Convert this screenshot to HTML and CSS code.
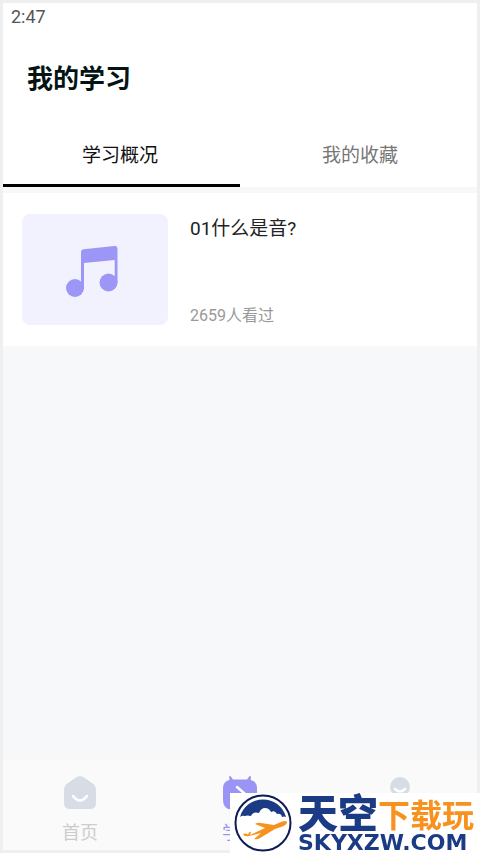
FILE: index.html
```html
<!DOCTYPE html>
<html lang="zh-CN">
<head>
<meta charset="utf-8">
<meta name="viewport" content="width=device-width, initial-scale=1">
<title>我的学习</title>
<link rel="stylesheet" href="styles.css">
</head>
<body>
<div class="app">
  <header class="header">
    <time class="clock">2:47</time>
    <h1 class="title">我的学习</h1>
  </header>
  <div class="tabs" role="tablist">
    <button class="tab tab-active" type="button" role="tab" aria-selected="true">学习概况</button>
    <button class="tab" type="button" role="tab" aria-selected="false">我的收藏</button>
  </div>
  <main class="content">
    <article class="course">
      <div class="cover">
        <svg class="note" viewBox="0 0 58 52" aria-hidden="true">
          <path d="M15 43V6q0-2.500 2.500-2.800L48.500 0Q51.500-.2 51.500 2.500V37h-2.800V14L18 17v26z"/>
          <circle cx="9" cy="42" r="9"/>
          <circle cx="42.500" cy="36.500" r="9"/>
        </svg>
      </div>
      <div class="info">
        <h2 class="name">01什么是音?</h2>
        <p class="views">2659人看过</p>
      </div>
    </article>
  </main>
  <nav class="nav">
    <a class="item" href="#">
      <svg class="icon" viewBox="0 0 36 36" aria-hidden="true">
        <path fill="#d7dce5" d="M14 2.500q4-2.500 8 0l8.500 5.800Q34 10.800 34 15v13q0 6-6 6H8q-6 0-6-6V15q0-4.200 3.500-6.700z"/>
        <path class="smile" d="M11 21q7 9 14 0"/>
      </svg>
      <span>首页</span>
    </a>
    <a class="item item-active" href="#">
      <svg class="icon" viewBox="0 0 36 36" aria-hidden="true">
        <path fill="#9a95f5" d="M7 1.500 8.500 1l2.500 3.500h14L27.500 1l1.500.5-.3 3.500Q35 6.500 35 13v12q0 9.500-9 9.500H10Q1 34.500 1 25V13Q1 6.500 7.500 5z"/>
        <path class="smile" d="m15 12 7 6-7 6"/>
      </svg>
      <span>学习</span>
    </a>
    <a class="item" href="#" aria-label="我的">
      <svg class="icon" viewBox="0 0 36 36" aria-hidden="true">
        <circle cx="18" cy="12" r="10" fill="#d7dce5"/>
        <path class="smile" d="M13 14q5 5 10 0"/>
        <path fill="#d7dce5" d="M4 34q0-10 14-10t14 10z"/>
      </svg>
    </a>
  </nav>
</div>
<aside class="brand">
  <svg class="logo" viewBox="0 0 60 60" aria-hidden="true">
    <circle cx="30" cy="30" r="27.500" fill="#fff" stroke="#101b55" stroke-width="2"/>
    <path fill="#1b3c85" d="M7 24C10 13 19 6.500 30 6.500S50 13 53 24q-2-1-4 0-1-4-5-3-2-4-6-2-2-4-6-4t-6 5q-6-2-8 3-4-1-6 0-3-1-5 1z"/>
    <path fill="#f8921e" d="M10 41q3-1 5 .5Q16 38 18 39l-1 3 15-7-10-4q3-2 6-1l13 2 7-3q5-2 6 0 0 3-6 5l-6 2-15 9q-3 2-6 1l7-6-12 3q-5 1-6-2z"/>
  </svg>
  <div class="words">
    <div class="line"><span class="sky">天空</span><span class="play">下载玩</span></div>
    <div class="domain">SKYXZW.COM</div>
  </div>
</aside>
</body>
</html>
```
FILE: styles.css
```css
* { box-sizing: border-box; }

body {
  margin: 0;
  background: #fff;
  font-family: Roboto, "Noto Sans CJK SC", sans-serif;
}

h1, h2, p { margin: 0; }

.app {
  min-height: 100vh;
  display: flex;
  flex-direction: column;
}

/* Thin frame drawn over the edges of the window */
.app::after {
  content: "";
  position: fixed;
  inset: 0;
  border: 3px solid #efeff0;
  pointer-events: none;
}

.header {
  background: #fff;
  padding: 7px 11px 24px;
}

.clock {
  display: block;
  font-size: 18px;
  line-height: 20px;
  color: #555;
}

.title {
  padding: 32px 16px 0;
  font-size: 26px;
  line-height: 40px;
  font-weight: 700;
  color: #041414;
}

.tabs {
  display: flex;
  background: #fff;
}

.tab {
  flex: 1;
  height: 64px;
  padding: 0;
  border: 0;
  border-bottom: 3px solid transparent;
  background: none;
  font: inherit;
  font-size: 19px;
  color: #777;
}

.tab-active {
  border-bottom-color: #000;
  color: #111;
}

.content {
  flex: 1;
  padding-top: 6px;
  background: #f7f8fa;
}

.course {
  display: flex;
  gap: 22px;
  padding: 21px 22px;
  background: #fff;
}

.cover {
  width: 146px;
  height: 111px;
  padding-top: 4px;
  border-radius: 8px;
  display: grid;
  place-items: center;
  background: #f2f2ff;
}

.note {
  width: 58px;
  height: 52px;
  fill: #9c96f7;
}

.info {
  flex: 1;
  padding-top: 2px;
  display: flex;
  flex-direction: column;
  justify-content: space-between;
}

.name {
  font-size: 19px;
  line-height: 26px;
  font-weight: 400;
  color: #222;
}

.views {
  font-size: 16px;
  line-height: 18px;
  color: #999;
}

.nav {
  display: flex;
  height: 94px;
  padding-top: 16px;
  background: #fafafa;
}

.item {
  flex: 1;
  display: flex;
  flex-direction: column;
  align-items: center;
  gap: 8px;
  font-size: 18px;
  line-height: 28px;
  color: #ccc;
  text-decoration: none;
}

.item-active { color: #9a95f5; }

.icon {
  width: 36px;
  height: 36px;
}

.smile {
  fill: none;
  stroke: #fff;
  stroke-width: 2.5;
  stroke-linecap: round;
}

.brand {
  position: fixed;
  z-index: 1;
  right: 0;
  bottom: 0;
  width: 250px;
  height: 60px;
  padding-left: 3px;
  display: flex;
  gap: 5px;
  background: #fff;
}

.logo {
  flex: none;
  width: 60px;
  height: 60px;
}

.words { white-space: nowrap; }

.line {
  display: flex;
  align-items: center;
  height: 40px;
  font-family: "Noto Sans CJK SC", sans-serif;
  font-weight: 900;
}

.sky {
  font-size: 40px;
  line-height: 36px;
  padding-bottom: 4px;
  color: #1b3c85;
}

.play {
  font-size: 32px;
  line-height: 36px;
  font-weight: 700;
  color: #f8921e;
}

.domain {
  font-family: "DejaVu Sans", sans-serif;
  font-size: 22px;
  line-height: 20px;
  font-weight: 700;
  color: #1b3c85;
}
```
